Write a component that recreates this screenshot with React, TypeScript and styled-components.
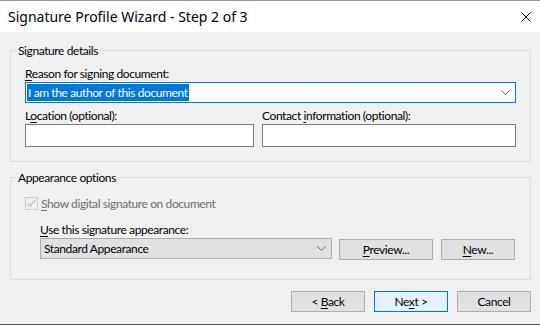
import React from "react";
import styled, { createGlobalStyle } from "styled-components";

const GlobalStyle = createGlobalStyle`
  html, body { margin: 0; padding: 0; background: #f0f0f0; }
  body {
    font-family: Lato, "Noto Sans", "Liberation Sans", sans-serif;
    font-size: 12px;
    letter-spacing: -0.4px;
    color: #000;
  }
  * { box-sizing: border-box; }
`;

const Window = styled.div`
  width: 540px;
  height: 325px;
  display: flex;
  flex-direction: column;
  border-top: 1px solid #9a9a9a;
  border-bottom: 1px solid #4d4d4d;
  background: #f0f0f0;
  overflow: hidden;
`;

const TitleBar = styled.div`
  height: 31px;
  flex: none;
  background: #ffffff;
  display: flex;
  align-items: center;
  justify-content: space-between;
  padding: 0 9px 0 8px;
`;

const Title = styled.span`
  font-family: "Noto Sans", sans-serif;
  font-size: 14px;
  letter-spacing: 0;
  line-height: 18px;
  color: #000;
`;

const Body = styled.div`
  flex: 1;
  display: flex;
  flex-direction: column;
  padding: 11px 9px 0 10px;
`;

const Group = styled.fieldset<{ $gapTop?: number; $padBottom: number; $padTop: number }>`
  margin: ${(p) => p.$gapTop ?? 0}px 0 0 0;
  padding: ${(p) => p.$padTop}px 14px ${(p) => p.$padBottom}px 14px;
  border: 1px solid #dcdcdc;
  min-width: 0;
  display: flex;
  flex-direction: column;
`;

const Legend = styled.legend`
  padding: 0 1px;
  margin-left: -8px;
  line-height: 15px;
  height: 15px;
`;

const Label = styled.div<{ $top?: number; $indent?: number }>`
  line-height: 15px;
  height: 15px;
  margin-top: ${(p) => p.$top ?? 0}px;
  margin-left: ${(p) => p.$indent ?? 0}px;
  margin-bottom: 1px;
  white-space: nowrap;
`;

const Key = styled.span`
  text-decoration: underline;
  text-underline-offset: 2px;
  text-decoration-thickness: 1px;
`;

const Combo = styled.div<{ $focused?: boolean }>`
  height: 21px;
  border: 1px solid ${(p) => (p.$focused ? "#0078d7" : "#adadad")};
  background: ${(p) => (p.$focused ? "#ffffff" : "#e1e1e1")};
  display: flex;
  align-items: center;
  justify-content: space-between;
  padding: 0 5px 0 ${(p) => (p.$focused ? 1 : 3)}px;
`;

const Selected = styled.span`
  background: #0078d7;
  color: #ffffff;
  line-height: 17px;
  height: 17px;
  padding: 0 1px;
`;

const ComboText = styled.span`
  line-height: 15px;
`;

const Chevron = () => (
  <svg width="9" height="5" viewBox="0 0 9 5">
    <path d="M0.5 0.5 L4.5 4.5 L8.5 0.5" fill="none" stroke="#6a6a6a" strokeWidth="1" />
  </svg>
);

const FieldsGrid = styled.div`
  display: grid;
  grid-template-columns: 229px 1fr;
  column-gap: 8px;
  margin-top: 5px;
`;

const Field = styled.div`
  display: flex;
  flex-direction: column;
`;

const TextInput = styled.div`
  height: 23px;
  border: 1px solid #7a7a7a;
  background: #ffffff;
`;

const CheckRow = styled.div`
  display: flex;
  align-items: center;
  height: 15px;
  margin-top: 11px;
  color: #6d6d6d;
`;

const CheckBox = styled.span`
  width: 13px;
  height: 13px;
  border: 1px solid #cccccc;
  background: #f0f0f0;
  display: inline-flex;
  align-items: center;
  justify-content: center;
  margin-right: 3px;
`;

const AppearanceRow = styled.div`
  display: flex;
  align-items: flex-start;
  margin-left: 15px;
`;

const AppearanceCombo = styled(Combo)`
  width: 292px;
`;

const Button = styled.button<{ $w: number; $default?: boolean; $offset?: number }>`
  width: ${(p) => p.$w}px;
  height: 21px;
  margin: ${(p) => p.$offset ?? 0}px 0 0 0;
  padding: 0;
  border: 1px solid ${(p) => (p.$default ? "#0078d7" : "#adadad")};
  background: ${(p) => (p.$default ? "#e5f1fb" : "#e1e1e1")};
  font-family: inherit;
  font-size: 12px;
  letter-spacing: -0.4px;
  line-height: 15px;
  color: #000;
  display: flex;
  align-items: center;
  justify-content: center;
`;

const SideButtons = styled.div`
  display: flex;
  gap: 8px;
  margin-left: 7px;
`;

const Footer = styled.div`
  display: flex;
  justify-content: flex-end;
  gap: 9px;
  margin-top: 11px;
`;

const CloseIcon = () => (
  <svg width="10" height="10" viewBox="0 0 10 10">
    <path d="M0.5 0.5 L9.5 9.5 M9.5 0.5 L0.5 9.5" stroke="#000" strokeWidth="1" fill="none" />
  </svg>
);

const CheckMark = () => (
  <svg width="11" height="11" viewBox="0 0 11 11">
    <path d="M1.5 5.5 L4 8 L9.5 2" stroke="#c4c4c4" strokeWidth="1.3" fill="none" />
  </svg>
);

export default function App() {
  return (
    <>
      <GlobalStyle />
      <Window>
        <TitleBar>
          <Title>Signature Profile Wizard - Step 2 of 3</Title>
          <CloseIcon />
        </TitleBar>
        <Body>
          <Group $padTop={8} $padBottom={14}>
            <Legend>Signature details</Legend>
            <Label>
              <Key>R</Key>eason for signing document:
            </Label>
            <Combo $focused>
              <Selected>I am the author of this document</Selected>
              <Chevron />
            </Combo>
            <FieldsGrid>
              <Field>
                <Label>
                  L<Key>o</Key>cation (optional):
                </Label>
                <TextInput />
              </Field>
              <Field>
                <Label>
                  Contact <Key>i</Key>nformation (optional):
                </Label>
                <TextInput />
              </Field>
            </FieldsGrid>
          </Group>
          <Group $gapTop={8} $padTop={0} $padBottom={19}>
            <Legend>Appearance options</Legend>
            <CheckRow>
              <CheckBox>
                <CheckMark />
              </CheckBox>
              <span>
                <Key>S</Key>how digital signature on document
              </span>
            </CheckRow>
            <Label $top={11} $indent={15}>
              <Key>U</Key>se this signature appearance:
            </Label>
            <AppearanceRow>
              <AppearanceCombo>
                <ComboText>Standard Appearance</ComboText>
                <Chevron />
              </AppearanceCombo>
              <SideButtons>
                <Button $w={94} $offset={1}>
                  <span>
                    <Key>P</Key>review...
                  </span>
                </Button>
                <Button $w={74} $offset={1}>
                  <span>
                    <Key>N</Key>ew...
                  </span>
                </Button>
              </SideButtons>
            </AppearanceRow>
          </Group>
          <Footer>
            <Button $w={74}>
              <span>
                &lt; <Key>B</Key>ack
              </span>
            </Button>
            <Button $w={74} $default>
              <span>
                Ne<Key>x</Key>t &gt;
              </span>
            </Button>
            <Button $w={74}>Cancel</Button>
          </Footer>
        </Body>
      </Window>
    </>
  );
}
